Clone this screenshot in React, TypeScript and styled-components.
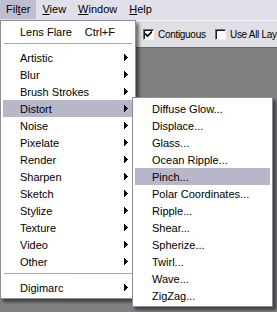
import React from 'react';
import styled, { createGlobalStyle } from 'styled-components';

const GlobalStyle = createGlobalStyle`
  html, body {
    margin: 0;
    padding: 0;
  }
  body {
    width: 277px;
    height: 312px;
    overflow: hidden;
    background: #808080;
    font-family: "Liberation Sans", Arial, sans-serif;
    font-size: 11px;
    color: #000;
  }
`;

const Screen = styled.div`
  position: relative;
  width: 277px;
  height: 312px;
  display: flex;
  flex-direction: column;
  background: #808080;
`;

const MenuBar = styled.div`
  display: flex;
  height: 20px;
  flex: none;
  background: #e1e0ea;
`;

const BarItem = styled.div<{ $active?: boolean }>`
  height: 19px;
  line-height: 19px;
  padding: 0 6px;
  background: ${p => (p.$active ? '#bfbed0' : 'transparent')};
`;

const OptionsBar = styled.div`
  flex: none;
  height: 26px;
  display: flex;
  align-items: center;
  padding-left: 143px;
  overflow: hidden;
  border-top: 1px solid #fbfbfd;
  border-bottom: 1px solid #666;
  background: #dfdfe5;
  font-size: 10px;
  letter-spacing: -0.3px;
`;

const Option = styled.label<{ $width?: number }>`
  display: flex;
  align-items: center;
  gap: 4px;
  width: ${p => (p.$width ? `${p.$width}px` : 'auto')};
  flex: none;
  white-space: nowrap;
`;

const CheckBox = styled.span`
  box-sizing: border-box;
  width: 11px;
  height: 11px;
  display: flex;
  align-items: center;
  justify-content: center;
  background: #fff;
  border: 1px solid;
  border-color: #707070 #f4f4f4 #f4f4f4 #707070;
  box-shadow: inset 1px 1px 0 #1c1c1c;
`;

const Canvas = styled.div`
  flex: 1;
  background: #808080;
`;

const Menu = styled.div<{ $left: number; $top: number; $width: number }>`
  position: absolute;
  left: ${p => p.$left}px;
  top: ${p => p.$top}px;
  width: ${p => p.$width}px;
  box-sizing: border-box;
  padding: 2px;
  background: #fff;
  border: 1px solid #8c8b98;
  box-shadow: 3px 3px 3px rgba(0, 0, 0, 0.5);
`;

const Item = styled.div<{ $active?: boolean }>`
  height: 17px;
  display: flex;
  align-items: center;
  padding: 0 5px 0 17px;
  white-space: nowrap;
  background: ${p => (p.$active ? '#b8b7ca' : 'transparent')};
`;

const Shortcut = styled.span`
  margin-left: auto;
  margin-right: 13px;
`;

const ArrowIcon = styled.svg`
  margin-left: auto;
  display: block;
`;

const Separator = styled.div`
  height: 1px;
  margin: 3px 1px 5px;
  background: #a5a4b0;
`;

const Arrow = () => (
  <ArrowIcon width="4" height="7" viewBox="0 0 4 7">
    <rect x="0" y="0" width="1" height="7" fill="#000" />
    <rect x="1" y="1" width="1" height="5" fill="#000" />
    <rect x="2" y="2" width="1" height="3" fill="#000" />
    <rect x="3" y="3" width="1" height="1" fill="#000" />
  </ArrowIcon>
);

const groups = [
  'Artistic',
  'Blur',
  'Brush Strokes',
  'Distort',
  'Noise',
  'Pixelate',
  'Render',
  'Sharpen',
  'Sketch',
  'Stylize',
  'Texture',
  'Video',
  'Other',
];

const distort = [
  'Diffuse Glow...',
  'Displace...',
  'Glass...',
  'Ocean Ripple...',
  'Pinch...',
  'Polar Coordinates...',
  'Ripple...',
  'Shear...',
  'Spherize...',
  'Twirl...',
  'Wave...',
  'ZigZag...',
];

export default function App() {
  return (
    <Screen>
      <GlobalStyle />
      <MenuBar>
        <BarItem $active>
          Fil<u>t</u>er
        </BarItem>
        <BarItem>
          <u>V</u>iew
        </BarItem>
        <BarItem>
          <u>W</u>indow
        </BarItem>
        <BarItem>
          <u>H</u>elp
        </BarItem>
      </MenuBar>
      <OptionsBar>
        <Option $width={72}>
          <CheckBox>
            <svg width="7" height="7" viewBox="0 0 7 7">
              <path d="M0 2.5 L2.5 5 L7 0.5" fill="none" stroke="#000" strokeWidth="1.6" />
            </svg>
          </CheckBox>
          Contiguous
        </Option>
        <Option>
          <CheckBox />
          Use All Layers
        </Option>
      </OptionsBar>
      <Canvas />

      <Menu $left={0} $top={20} $width={136}>
        <Item>
          Lens Flare
          <Shortcut>Ctrl+F</Shortcut>
        </Item>
        <Separator />
        {groups.map(g => (
          <Item key={g} $active={g === 'Distort'}>
            {g}
            <Arrow />
          </Item>
        ))}
        <Separator />
        <Item>
          Digimarc
          <Arrow />
        </Item>
      </Menu>

      <Menu $left={132} $top={97} $width={141}>
        {distort.map(d => (
          <Item key={d} $active={d === 'Pinch...'}>
            {d}
          </Item>
        ))}
      </Menu>
    </Screen>
  );
}
